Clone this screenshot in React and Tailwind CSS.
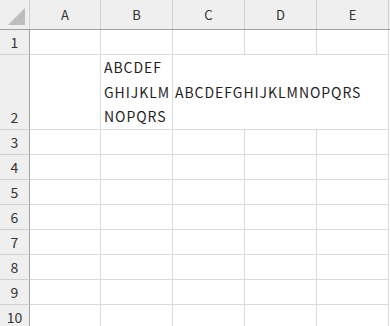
import React from 'react';

const cols = ['A', 'B', 'C', 'D', 'E'];
const colW = ['w-[71px]', 'w-[72px]', 'w-[72px]', 'w-[72px]', 'w-[72px]'];
const rows = [1, 2, 3, 4, 5, 6, 7, 8, 9, 10];

function Cell({ w, noRight, children, className = '' }) {
    return (
        <div
            className={`${w} h-full shrink-0 border-b border-[#dadada] ${noRight ? '' : 'border-r'} ${className}`}
        >
            {children}
        </div>
    );
}

export default function App() {
    return (
        <div
            className="w-[390px] h-[326px] overflow-hidden bg-white text-[#1f1f1f]"
            style={{ fontFamily: '"Noto Sans CJK JP", "Noto Sans", sans-serif' }}
        >
            {/* column header */}
            <div className="flex h-[30px] bg-[#efefef] border-b border-[#a0a0a0]">
                <div className="w-[30px] shrink-0 h-full border-r border-[#d0d0d0] relative">
                    <svg className="absolute left-0 top-0" width="29" height="29" viewBox="0 0 29 29">
                        <polygon points="25,8 25,25 8,25" fill="#bdbdbd" />
                    </svg>
                </div>
                {cols.map((c, i) => (
                    <div
                        key={c}
                        className={`${colW[i]} shrink-0 h-full border-r border-[#d0d0d0] flex items-center justify-center text-[13px] text-[#333]`}
                    >
                        {c}
                    </div>
                ))}
            </div>

            {rows.map((r) => {
                const tall = r === 2;
                return (
                    <div key={r} className={`flex ${tall ? 'h-[75px]' : 'h-[25px]'}`}>
                        <div
                            className={`w-[30px] shrink-0 h-full bg-[#efefef] border-r border-[#a0a0a0] border-b border-b-[#d0d0d0] flex justify-center text-[14px] text-[#333] ${tall ? 'items-end pb-[1px]' : 'items-center'}`}
                        >
                            {r}
                        </div>
                        <Cell w={colW[0]} />
                        <Cell w={colW[1]} className={tall ? 'flex items-center pl-[3px] text-[14px] tracking-[0.95px] leading-[24.5px]' : ''}>
                            {tall && (
                                <div>
                                    ABCDEF
                                    <br />
                                    GHIJKLM
                                    <br />
                                    NOPQRS
                                </div>
                            )}
                        </Cell>
                        <Cell w={colW[2]} noRight={tall} className={tall ? 'flex items-center pl-[2px] text-[14px] tracking-[0.95px] whitespace-nowrap overflow-visible' : ''}>
                            {tall && 'ABCDEFGHIJKLMNOPQRS'}
                        </Cell>
                        <Cell w={colW[3]} noRight={tall} />
                        <Cell w={colW[4]} />
                    </div>
                );
            })}
        </div>
    );
}
